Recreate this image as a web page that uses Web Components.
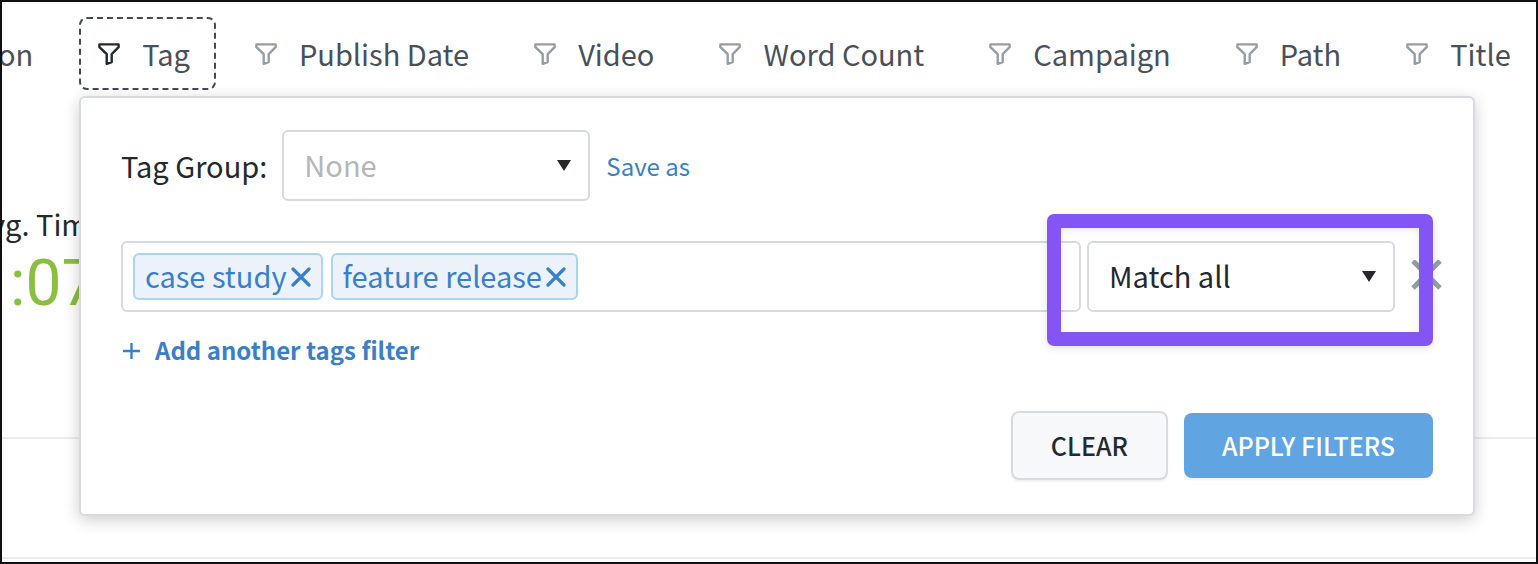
<!DOCTYPE html>
<html lang="en">
<head>
<meta charset="utf-8">
<meta name="viewport" content="width=device-width, initial-scale=1">
<title>Tag filter</title>
<style>
    * {
        box-sizing: border-box;
    }

    body {
        margin: 0;
        font-family: "Noto Sans CJK SC", "Noto Sans", sans-serif;
        font-size: 29px;
        line-height: 40px;
        color: #24292e;
        background: #fff;
    }
</style>
</head>
<body>
<analytics-page>
    <filter-bar slot="filters">
        <filter-tab no-icon>on</filter-tab>
        <filter-tab active>Tag</filter-tab>
        <filter-tab>Publish Date</filter-tab>
        <filter-tab>Video</filter-tab>
        <filter-tab>Word Count</filter-tab>
        <filter-tab>Campaign</filter-tab>
        <filter-tab>Path</filter-tab>
        <filter-tab>Title</filter-tab>
    </filter-bar>
    <metric-tile slot="metrics" label="vg. Time" value=":07"></metric-tile>
    <filter-popover slot="popover">
        <select-field slot="group" label="Tag Group:" value="None" placeholder></select-field>
        <link-action slot="group">Save as</link-action>
        <tag-row slot="rows">
            <tag-chip>case study</tag-chip>
            <tag-chip>feature release</tag-chip>
        </tag-row>
        <link-action slot="rows" add>Add another tags filter</link-action>
        <action-button slot="actions">CLEAR</action-button>
        <action-button slot="actions" primary>APPLY FILTERS</action-button>
    </filter-popover>
</analytics-page>

<script>
const resetStyles = `
    * {
        box-sizing: border-box;
    }

    button, input, select {
        font: inherit;
        color: inherit;
        margin: 0;
        padding: 0;
        border: 0;
        background: none;
    }

    svg {
        display: block;
        flex: none;
    }
`;

class AnalyticsPage extends HTMLElement {
    constructor() {
        super();
        this.attachShadow({ mode: 'open' });
    }

    connectedCallback() {
        this.shadowRoot.innerHTML = `
            <style>
                ${resetStyles}
                :host {
                    display: flex;
                    flex-direction: column;
                    position: relative;
                    box-sizing: border-box;
                    min-height: 100vh;
                    border: 2px solid #101012;
                    overflow: hidden;
                }

                .metrics {
                    padding-top: 113px;
                    padding-bottom: 117px;
                    border-bottom: 2px solid #ececec;
                }

                .row {
                    height: 120px;
                    border-bottom: 2px solid #ececec;
                }

                .overlay {
                    position: absolute;
                    top: 94px;
                    left: 77px;
                    right: 61px;
                }
            </style>
            <slot name="filters"></slot>
            <div class="metrics"><slot name="metrics"></slot></div>
            <div class="row"></div>
            <div class="overlay"><slot name="popover"></slot></div>
        `;
    }
}

class FilterBar extends HTMLElement {
    constructor() {
        super();
        this.attachShadow({ mode: 'open' });
    }

    connectedCallback() {
        this.shadowRoot.innerHTML = `
            <style>
                :host {
                    display: block;
                    padding-top: 15px;
                }

                nav {
                    display: flex;
                    gap: 20px;
                    margin-left: -6px;
                }
            </style>
            <nav><slot></slot></nav>
        `;
    }
}

class FilterTab extends HTMLElement {
    constructor() {
        super();
        this.attachShadow({ mode: 'open' });
    }

    connectedCallback() {
        const icon = this.hasAttribute('no-icon') ? '' : `
            <svg width="22" height="22" viewBox="0 0 22 22" fill="none" stroke="currentColor" stroke-width="2.4" stroke-linejoin="round">
                <path d="M1.4 1.4H20.6V4.2L13.7 11.2V19L8.7 20.8V11.2L1.4 4.2Z"/>
            </svg>`;

        this.shadowRoot.innerHTML = `
            <style>
                ${resetStyles}
                :host {
                    display: block;
                    flex: none;
                    color: #48505a;
                }

                button {
                    display: flex;
                    align-items: center;
                    gap: 22px;
                    height: 73px;
                    padding: 0 24px 0 17px;
                    border: 2px dashed transparent;
                    border-radius: 8px;
                    white-space: nowrap;
                }

                span {
                    padding-bottom: 2px;
                }

                svg {
                    color: #959da5;
                }

                :host([no-icon]) button {
                    padding-left: 0;
                }

                :host([active]) button {
                    border-color: #444b54;
                }

                :host([active]) svg {
                    color: #24292e;
                }
            </style>
            <button type="button">${icon}<span><slot></slot></span></button>
        `;
    }
}

class MetricTile extends HTMLElement {
    constructor() {
        super();
        this.attachShadow({ mode: 'open' });
    }

    connectedCallback() {
        const label = this.getAttribute('label');
        const value = this.getAttribute('value');

        this.shadowRoot.innerHTML = `
            <style>
                :host {
                    display: block;
                    margin-left: -12px;
                    white-space: nowrap;
                }

                .value {
                    padding-top: 5px;
                    padding-left: 20px;
                    font-family: Roboto, sans-serif;
                    font-size: 64px;
                    line-height: 72px;
                    color: #8bbf3f;
                }
            </style>
            <div>${label}</div>
            <div class="value">${value}</div>
        `;
    }
}

class FilterPopover extends HTMLElement {
    constructor() {
        super();
        this.attachShadow({ mode: 'open' });
    }

    connectedCallback() {
        this.shadowRoot.innerHTML = `
            <style>
                :host {
                    display: block;
                    box-sizing: border-box;
                    padding: 32px 40px 34px;
                    border: 2px solid #d7dbe0;
                    border-radius: 6px;
                    background: #fff;
                    box-shadow: 0 4px 16px rgba(0, 0, 0, 0.2);
                }

                .group {
                    display: flex;
                    align-items: center;
                    gap: 16px;
                    margin-bottom: 40px;
                }

                .rows {
                    display: flex;
                    flex-direction: column;
                    gap: 18px;
                }

                .actions {
                    display: flex;
                    align-items: center;
                    justify-content: flex-end;
                    gap: 16px;
                    margin-top: 41px;
                }
            </style>
            <div class="group"><slot name="group"></slot></div>
            <div class="rows"><slot name="rows"></slot></div>
            <div class="actions"><slot name="actions"></slot></div>
        `;
    }
}

class SelectField extends HTMLElement {
    constructor() {
        super();
        this.attachShadow({ mode: 'open' });
    }

    connectedCallback() {
        const label = this.getAttribute('label');
        const value = this.getAttribute('value');
        const labelTag = label ? `<label for="field">${label}</label>` : '';
        const aria = label ? '' : 'aria-label="Match mode"';

        this.shadowRoot.innerHTML = `
            <style>
                ${resetStyles}
                :host {
                    display: flex;
                    align-items: center;
                    gap: 15px;
                }

                label {
                    padding-bottom: 2px;
                    white-space: nowrap;
                }

                .box {
                    display: grid;
                    align-items: center;
                    width: 308px;
                }

                select, svg {
                    grid-area: 1 / 1;
                }

                select {
                    appearance: none;
                    width: 100%;
                    height: 71px;
                    padding: 0 48px 3px 20px;
                    border: 2px solid #d7dbe0;
                    border-radius: 6px;
                    background: #fff;
                }

                :host([placeholder]) select {
                    color: #b4b6b8;
                }

                svg {
                    justify-self: end;
                    margin-right: 18px;
                    pointer-events: none;
                }
            </style>
            ${labelTag}
            <div class="box">
                <select id="field" ${aria}><option>${value}</option></select>
                <svg width="16" height="12" viewBox="0 0 16 12"><path d="M1 0H15L8 11Z" fill="#24292e"/></svg>
            </div>
        `;
    }
}

class TagRow extends HTMLElement {
    constructor() {
        super();
        this.attachShadow({ mode: 'open' });
    }

    connectedCallback() {
        this.shadowRoot.innerHTML = `
            <style>
                ${resetStyles}
                :host {
                    display: flex;
                    align-items: center;
                }

                .tags {
                    display: flex;
                    flex: 1;
                    gap: 8px;
                    min-width: 0;
                    padding: 10px;
                    border: 2px solid #d7dbe0;
                    border-radius: 6px;
                }

                input {
                    flex: 1;
                    min-width: 0;
                    outline: none;
                }

                .match {
                    position: relative;
                    margin: 0 16px 0 6px;
                }

                /* callout frame round the match mode */
                .callout {
                    position: absolute;
                    inset: -27px -38px -34px -40px;
                    border: 14px solid #8355f5;
                    border-radius: 7px;
                    box-shadow: 0 2px 8px rgba(0, 0, 0, 0.12), inset 0 2px 6px rgba(0, 0, 0, 0.1);
                    pointer-events: none;
                    z-index: 1;
                }

                .remove {
                    margin-right: -9px;
                    color: #959da5;
                }
            </style>
            <div class="tags"><slot></slot><input type="text" aria-label="Add tag"></div>
            <div class="match">
                <select-field value="Match all"></select-field>
                <div class="callout"></div>
            </div>
            <button class="remove" type="button" aria-label="Remove filter">
                <svg width="31" height="34" viewBox="0 0 31 34" fill="none" stroke="currentColor" stroke-width="5">
                    <path d="M2 1L29 28M29 1L2 28"/>
                </svg>
            </button>
        `;
    }
}

class TagChip extends HTMLElement {
    constructor() {
        super();
        this.attachShadow({ mode: 'open' });
    }

    connectedCallback() {
        this.shadowRoot.innerHTML = `
            <style>
                ${resetStyles}
                :host {
                    display: flex;
                    align-items: center;
                    flex: none;
                    gap: 4px;
                    box-sizing: border-box;
                    height: 47px;
                    padding: 0 10px;
                    border: 2px solid #aad4f5;
                    border-radius: 6px;
                    background: #ebf2f9;
                    color: #3a7fc8;
                    white-space: nowrap;
                }

                span {
                    padding-bottom: 3px;
                }
            </style>
            <span><slot></slot></span>
            <button type="button" aria-label="Remove tag">
                <svg width="20" height="20" viewBox="0 0 20 20" fill="none" stroke="currentColor" stroke-width="3.2" stroke-linecap="round">
                    <path d="M2 2L18 18M18 2L2 18"/>
                </svg>
            </button>
        `;
    }
}

class LinkAction extends HTMLElement {
    constructor() {
        super();
        this.attachShadow({ mode: 'open' });
    }

    connectedCallback() {
        const icon = this.hasAttribute('add') ? `
            <svg width="20" height="20" viewBox="0 0 20 20" stroke="currentColor" stroke-width="2.4">
                <path d="M2 11H19M10.5 3V19"/>
            </svg>` : '';

        this.shadowRoot.innerHTML = `
            <style>
                ${resetStyles}
                :host {
                    display: block;
                    font-size: 24px;
                    color: #3a7fc8;
                }

                :host([add]) {
                    font-weight: 700;
                }

                a {
                    display: inline-flex;
                    align-items: center;
                    gap: 14px;
                    color: inherit;
                    text-decoration: none;
                    vertical-align: top;
                }
            </style>
            <a href="#">${icon}<span><slot></slot></span></a>
        `;
    }
}

class ActionButton extends HTMLElement {
    constructor() {
        super();
        this.attachShadow({ mode: 'open' });
    }

    connectedCallback() {
        this.shadowRoot.innerHTML = `
            <style>
                ${resetStyles}
                :host {
                    display: block;
                    font-size: 25px;
                    font-weight: 500;
                }

                button {
                    display: block;
                    height: 69px;
                    padding: 0 38px 2px;
                    border: 2px solid #d7dbe0;
                    border-radius: 8px;
                    background: #f6f8fa;
                    box-shadow: 0 2px 2px rgba(0, 0, 0, 0.05);
                    white-space: nowrap;
                }

                :host([primary]) button {
                    height: 65px;
                    border: 0;
                    background: #60a5e1;
                    color: #fff;
                }
            </style>
            <button type="button"><slot></slot></button>
        `;
    }
}

customElements.define('analytics-page', AnalyticsPage);
customElements.define('filter-bar', FilterBar);
customElements.define('filter-tab', FilterTab);
customElements.define('metric-tile', MetricTile);
customElements.define('filter-popover', FilterPopover);
customElements.define('select-field', SelectField);
customElements.define('tag-row', TagRow);
customElements.define('tag-chip', TagChip);
customElements.define('link-action', LinkAction);
customElements.define('action-button', ActionButton);
</script>
</body>
</html>
